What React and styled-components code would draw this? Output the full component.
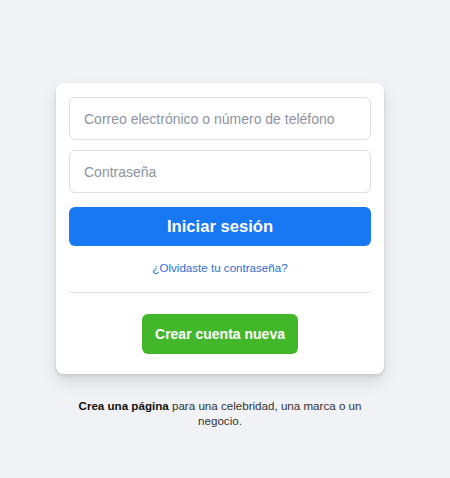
import React from "react";
import styled, { createGlobalStyle } from "styled-components";

const GlobalStyle = createGlobalStyle`
  body {
    margin: 0;
    background: #f0f2f5;
    font-family: "Liberation Sans", Arial, sans-serif;
  }
`;

const Page = styled.div`
  width: 440px;
  display: flex;
  flex-direction: column;
  align-items: center;
  padding-top: 83px;
  min-height: 478px;
  box-sizing: border-box;
`;

const Card = styled.form`
  width: 328px;
  box-sizing: border-box;
  background: #fff;
  border-radius: 8px;
  box-shadow: 0 2px 4px rgba(0, 0, 0, 0.1), 0 8px 16px rgba(0, 0, 0, 0.1);
  padding: 14px 13px 20px;
  display: flex;
  flex-direction: column;
  align-items: center;
`;

const Input = styled.input`
  width: 100%;
  box-sizing: border-box;
  height: 43px;
  border: 1px solid #dddfe2;
  border-radius: 6px;
  padding: 0 14px;
  font-family: inherit;
  font-size: 14px;
  color: #1c1e21;
  margin-bottom: ${(p) => p.$gap}px;
  outline: none;
  &::placeholder {
    color: #8d949e;
  }
`;

const LoginButton = styled.button`
  width: 100%;
  height: 39px;
  border: none;
  border-radius: 6px;
  background: #1877f2;
  color: #fff;
  font-family: inherit;
  font-size: 16.6px;
  font-weight: bold;
  cursor: pointer;
`;

const Forgot = styled.a`
  margin-top: 15px;
  font-size: 11.6px;
  line-height: 13px;
  color: #2d6fd2;
  text-decoration: none;
`;

const Divider = styled.hr`
  width: 100%;
  border: none;
  border-top: 1px solid #dadde1;
  margin: 18px 0 21px;
`;

const CreateButton = styled.button`
  height: 40px;
  padding: 0 13px;
  border: none;
  border-radius: 6px;
  background: #42b72a;
  color: #fff;
  font-family: inherit;
  font-size: 14px;
  font-weight: bold;
  cursor: pointer;
`;

const Footer = styled.p`
  width: 300px;
  margin: 24px 0 0;
  text-align: center;
  font-size: 11.6px;
  line-height: 15px;
  color: #333;
  b {
    font-weight: bold;
    color: #111;
  }
`;

export default function App() {
  return (
    <>
      <GlobalStyle />
      <Page>
        <Card onSubmit={(e) => e.preventDefault()}>
          <Input $gap={10} placeholder="Correo electrónico o número de teléfono" />
          <Input $gap={14} type="password" placeholder="Contraseña" />
          <LoginButton type="submit">Iniciar sesión</LoginButton>
          <Forgot href="#">¿Olvidaste tu contraseña?</Forgot>
          <Divider />
          <CreateButton type="button">Crear cuenta nueva</CreateButton>
        </Card>
        <Footer>
          <b>Crea una página</b> para una celebridad, una marca o un negocio.
        </Footer>
      </Page>
    </>
  );
}
